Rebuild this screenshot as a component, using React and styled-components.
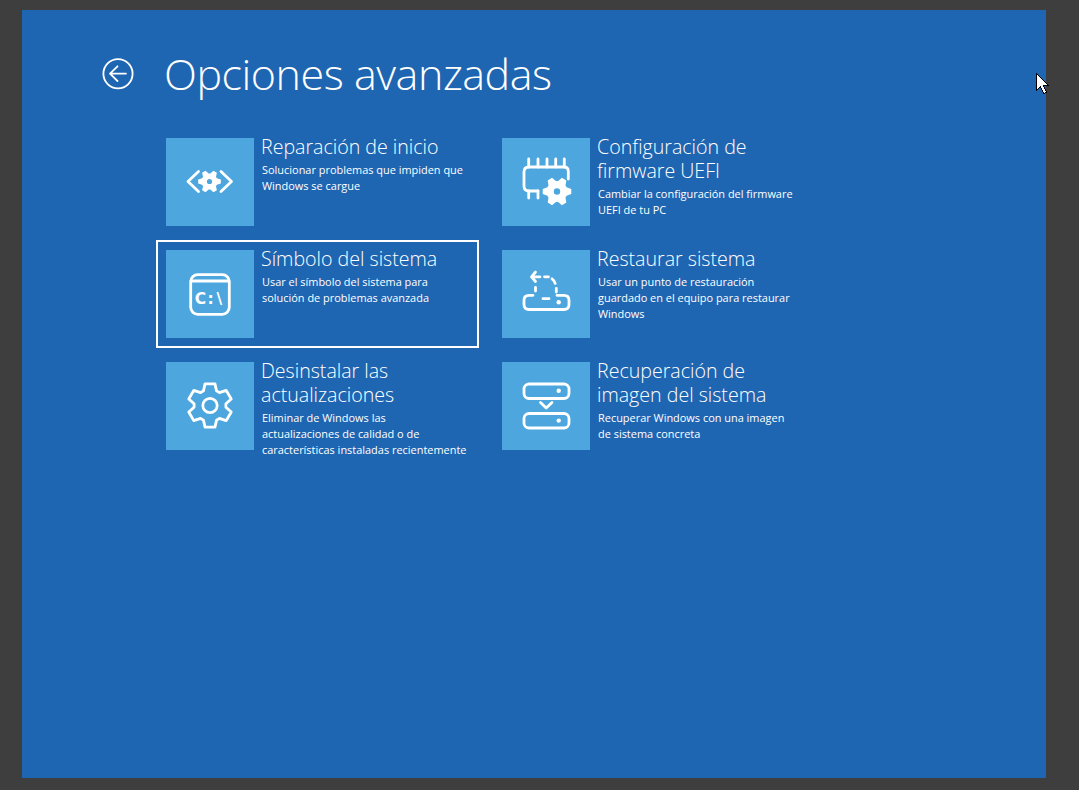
import React from "react";
import styled, { createGlobalStyle } from "styled-components";

const Global = createGlobalStyle`
  html, body { margin: 0; padding: 0; background: #3e3e3e; }
  body { font-family: "Open Sans", "Noto Sans", "Liberation Sans", sans-serif; color: #fff; overflow: hidden; }
`;

const Stage = styled.div`
  position: relative;
  width: 1079px;
  height: 790px;
  padding: 10px 33px 12px 22px;
  box-sizing: border-box;
`;
const Panel = styled.main`
  width: 1024px;
  height: 768px;
  background: #1f66b2;
  padding: 33px 0 0 80px;
  box-sizing: border-box;
`;
const Header = styled.header`
  display: flex;
  align-items: center;
  gap: 30px;
  height: 62px;
`;
const BackButton = styled.svg`
  width: 32px;
  height: 32px;
  flex: none;
  display: block;
`;
const Title = styled.h1`
  margin: 0;
  font-weight: 300;
  font-size: 43px;
  line-height: 62px;
  letter-spacing: -0.45px;
`;
const Grid = styled.div`
  display: grid;
  grid-template-columns: 323px 323px;
  grid-auto-rows: 108px;
  column-gap: 13px;
  row-gap: 4px;
  margin: 23px 0 0 54px;
`;
const Item = styled.div`
  display: flex;
  gap: 7px;
  padding: 8px;
  border: 2px solid ${(p) => (p.$focused ? "#fff" : "transparent")};
`;
const Tile = styled.div`
  width: 88px;
  height: 88px;
  flex: none;
  background: #4da6dd;
`;
const Body = styled.div`
  display: flex;
  flex-direction: column;
  min-width: 0;
`;
const ItemTitle = styled.div`
  font-weight: 300;
  font-size: 19.6px;
  line-height: 24px;
  margin-top: -3px;
  white-space: pre;
`;
const ItemDesc = styled.div`
  font-weight: 400;
  font-size: 10.95px;
  line-height: 16px;
  margin: 3px 0 0 1px;
  white-space: pre;
`;
const IconSvg = styled.svg`
  width: 88px;
  height: 88px;
  display: block;
  fill: none;
  stroke: #fff;
  stroke-width: 2.8;
  stroke-linecap: round;
  stroke-linejoin: round;
`;
const CmdText = styled.text`
  font-family: "DejaVu Sans", sans-serif;
  font-weight: 700;
  font-size: 15.5px;
  fill: #fff;
  stroke: none;
`;
const Cursor = styled.svg`
  position: absolute;
  left: 1036px;
  top: 73px;
  width: 14px;
  height: 24px;
  shape-rendering: crispEdges;
`;

function gearPath(cx, cy, R, r, wo, wi, start) {
  const pts = [];
  for (let i = 0; i < 6; i++) {
    const a = start + i * 60;
    [[a - wi, r], [a - wo, R], [a + wo, R], [a + wi, r]].forEach(([d, rad]) => {
      const t = (d * Math.PI) / 180;
      pts.push(`${(cx + rad * Math.cos(t)).toFixed(2)} ${(cy + rad * Math.sin(t)).toFixed(2)}`);
    });
  }
  return "M" + pts.join("L") + "Z";
}
function solidGear(cx, cy, R, r, hole) {
  const outer = gearPath(cx, cy, R, r, 10, 24, 0);
  const h = `M${cx - hole} ${cy}a${hole} ${hole} 0 1 0 ${hole * 2} 0a${hole} ${hole} 0 1 0 ${-hole * 2} 0Z`;
  return <path d={outer + h} fill="#fff" fillRule="evenodd" stroke="none" />;
}

const StartIcon = () => (
  <IconSvg viewBox="0 0 88 88">
    <path d="M32.5 33.5L22 43.5L32.5 53.5M55 33.5L65.5 43.5L55 53.5" />
    {solidGear(43.5, 43.5, 11.5, 8, 2.6)}
  </IconSvg>
);
const FirmwareIcon = () => (
  <IconSvg viewBox="0 0 88 88">
    <path d="M66.3 41V33.5Q66.3 29 62 29H27Q22 29 22 34V48Q22 53 27 53H36" />
    <path d="M26.7 21V29M36 21V29M45 21V29M53.7 21V29M62.3 21V29M26.7 53V60M36 53V60" />
    {solidGear(55, 53.5, 14.5, 10.5, 3.2)}
  </IconSvg>
);
const CmdIcon = () => (
  <IconSvg viewBox="0 0 88 88">
    <rect x="24.7" y="24.7" width="38.6" height="39.6" rx="7" />
    <path d="M25 31H63" />
    <CmdText x="28.8 41.5 50.5" y="54.2">C:\</CmdText>
  </IconSvg>
);
const RestoreIcon = () => (
  <IconSvg viewBox="0 0 88 88">
    <path d="M33.5 22L29.5 26.8L33.5 31.5M30 26.8H38M42.5 26.8H46.5M50 28.8Q52.5 30.5 53.2 33.5M54.3 38.5V42" />
    <path d="M33.5 37.5V41M41 48.7H47" />
    <path d="M31 45.3H27Q22 45.3 22 50.3V54.5Q22 59.5 27 59.5H62Q67 59.5 67 54.5V50.3Q67 45.3 62 45.3H55" />
    <circle cx="56.7" cy="52.3" r="2.2" fill="#fff" stroke="none" />
  </IconSvg>
);
const GearIcon = () => (
  <IconSvg viewBox="0 0 88 88">
    <path d={gearPath(44, 43.5, 22.2, 16, 13, 24, 30)} />
    <circle cx="44" cy="43.5" r="7.2" />
  </IconSvg>
);
const ImageIcon = () => (
  <IconSvg viewBox="0 0 88 88">
    <rect x="22" y="22" width="45" height="14.5" rx="5" />
    <rect x="22" y="51.5" width="45" height="14.5" rx="5" />
    <path d="M38.5 40.5L44.2 46L50 40.5" />
    <circle cx="56.7" cy="28.8" r="2.2" fill="#fff" stroke="none" />
    <circle cx="56.7" cy="58.6" r="2.2" fill="#fff" stroke="none" />
  </IconSvg>
);

const items = [
  { t: "Reparación de inicio", d: "Solucionar problemas que impiden que\nWindows se cargue", I: StartIcon },
  { t: "Configuración de\nfirmware UEFI", d: "Cambiar la configuración del firmware\nUEFI de tu PC", I: FirmwareIcon },
  { t: "Símbolo del sistema", d: "Usar el símbolo del sistema para\nsolución de problemas avanzada", I: CmdIcon, f: true },
  { t: "Restaurar sistema", d: "Usar un punto de restauración\nguardado en el equipo para restaurar\nWindows", I: RestoreIcon },
  { t: "Desinstalar las\nactualizaciones", d: "Eliminar de Windows las\nactualizaciones de calidad o de\ncaracterísticas instaladas recientemente", I: GearIcon },
  { t: "Recuperación de\nimagen del sistema", d: "Recuperar Windows con una imagen\nde sistema concreta", I: ImageIcon },
];

export default function App() {
  return (
    <Stage>
      <Global />
      <Panel>
        <Header>
          <BackButton viewBox="0 0 32 32" fill="none" stroke="#fff" strokeWidth="1.8" strokeLinecap="round" strokeLinejoin="round">
            <circle cx="16" cy="15.8" r="14.6" />
            <path d="M15.5 8.3L8 15.6L15.5 23M8.5 15.6H24" />
          </BackButton>
          <Title>Opciones avanzadas</Title>
        </Header>
        <Grid>
          {items.map(({ t, d, I, f }) => (
            <Item key={t} $focused={f}>
              <Tile><I /></Tile>
              <Body>
                <ItemTitle>{t}</ItemTitle>
                <ItemDesc>{d}</ItemDesc>
              </Body>
            </Item>
          ))}
        </Grid>
      </Panel>
      <Cursor viewBox="0 0 14 24">
        <path d="M.5 .5V17.5L4.5 13.5L7.5 20.5L10.5 19.5L7.5 12.5H12.5Z" fill="#fff" stroke="#000" />
      </Cursor>
    </Stage>
  );
}
